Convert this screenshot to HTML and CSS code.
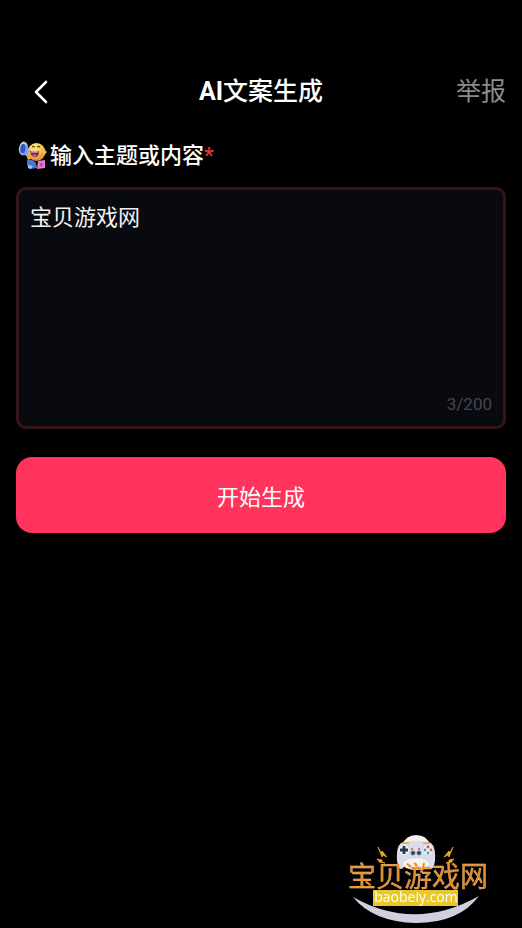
FILE: index.html
```html
<!DOCTYPE html>
<html lang="zh-CN">
<head>
<meta charset="utf-8">
<meta name="viewport" content="width=device-width, initial-scale=1">
<title>AI文案生成</title>
<link rel="stylesheet" href="styles.css">
</head>
<body>
<header class="topbar">
  <button class="back" type="button" aria-label="返回">
    <svg width="16" height="24" viewBox="0 0 16 24" fill="none" stroke="#fff" stroke-width="2.600" stroke-linecap="round" stroke-linejoin="round"><path d="M14 2 4 12 14 22"/></svg>
  </button>
  <h1 class="title"><span class="latin">AI</span>文案生成</h1>
  <a class="report" href="#">举报</a>
</header>
<main class="content">
  <form class="form">
    <label class="label" for="topic">
      <svg class="emoji" width="30" height="30" viewBox="0 0 30 30" aria-hidden="true">
        <defs>
          <radialGradient id="face" cx=".4" cy=".2" r=".8"><stop offset="0" stop-color="#fff08a"/><stop offset=".5" stop-color="#f7c64c"/><stop offset="1" stop-color="#d98b31"/></radialGradient>
          <linearGradient id="horn" x2="1" y2="1"><stop stop-color="#d7efff"/><stop offset="1" stop-color="#5a7ee8"/></linearGradient>
        </defs>
        <path d="M9 19q5-2 9 3l1 5-7 1-3-4z" fill="#4b73d0"/>
        <path d="m10 24 5 1-2 3-3-1z" fill="#a5c2f5"/>
        <circle cx="18.500" cy="11" r="9" fill="url(#face)"/>
        <path d="m25 8 4 3-3 3z" fill="#f3bd4b"/>
        <path d="M14 6q2-1 3 0M19 6q2-1 3 0" fill="none" stroke="#5b421d" stroke-width="1.300"/>
        <path d="M12 10q5 1 9 0 0 6-4 6-4 0-5-6z" fill="#7b235f"/>
        <path d="M13 10.500h7v1h-7z" fill="#f5d9e4"/>
        <path d="M14 14q3-1 5 0-2 3-5 0z" fill="#f7598f"/>
        <path d="m7 3 5 7-3 5-5-2z" fill="#8cb4f4"/>
        <ellipse cx="5.500" cy="7.500" rx="4.500" ry="7" fill="url(#horn)" transform="rotate(8 5 7)"/>
        <ellipse cx="5" cy="7.500" rx="2.600" ry="4.600" fill="#3554b8" transform="rotate(8 5 7)"/>
        <path d="m8 14 4-1 2 4-4 2z" fill="#e5a73f"/>
        <path d="m20 20 7-1v8l-8 1z" fill="#e878cf"/>
        <path d="m22 22 3 1-2 3z" fill="#a93aa0"/>
      </svg>
      <span>输入主题或内容</span><span class="required">*</span>
    </label>
    <div class="field">
      <textarea class="input" id="topic" maxlength="200" spellcheck="false">宝贝游戏网</textarea>
      <div class="count">3/200</div>
    </div>
    <button class="submit" type="button">开始生成</button>
  </form>
</main>
<svg class="watermark" width="144" height="96" viewBox="346 830 144 96" role="img" aria-label="宝贝游戏网 baobeiy.com">
  <path d="M353 897Q415 932 479 896 459 923 416 923 373 922 353 897Z" fill="#cfcfdd"/>
  <path d="M402 845Q406 835 416 835 427 835 430 845Z" fill="#f2f1ed"/>
  <path d="M401 843Q416 839 431 843 436 847 435 861 433 873 428 867 424 859 416 859 408 859 404 867 399 873 397 861 396 847 401 843Z" fill="#d9dbe9"/>
  <ellipse cx="416" cy="864" rx="13" ry="6" fill="#f4f3ef"/>
  <path d="M402 843h7M423 843h7" stroke="#e2a63f" stroke-width="1.500"/>
  <circle cx="404" cy="850" r="5" fill="#eef1f7"/><circle cx="428" cy="850" r="5" fill="#eef1f7"/>
  <path d="M400 850h8M404 846v8" stroke="#263949" stroke-width="2.800"/>
  <g fill="#d84b58"><circle cx="428" cy="847" r="1.400"/><circle cx="431" cy="850" r="1.400"/><circle cx="412" cy="849" r="1"/><circle cx="419" cy="849" r="1"/></g>
  <g fill="#38a9bc"><circle cx="425" cy="850" r="1.400"/><circle cx="428" cy="853" r="1.400"/></g>
  <g fill="#263949" stroke="#5b8297"><circle cx="413" cy="853" r="2"/><circle cx="419" cy="853" r="2"/></g>
  <path d="m378 847 3 6 1-2 5 6-4-2-1 2zM377 859l5 1v2l3 1-6-1v-1zM453 847l-3 6-1-2-5 6 4-2 1 2zM454 859l-5 1v2l-3 1 6-1v-1z" fill="#edaa20" stroke="#edaa20" stroke-width=".8"/>
  <text class="brand" x="348" y="887">宝贝游戏网</text>
  <path d="M373 890h85v16h-85z" fill="#e9c929"/>
  <text class="domain" x="416" y="902" text-anchor="middle">baobeiy.com</text>
</svg>
</body>
</html>
```
FILE: styles.css
```css
* {
  box-sizing: border-box;
}

body {
  margin: 0;
  min-height: 100vh;
  background: #000;
  color: #fff;
  font-family: Roboto, "Noto Sans CJK SC", sans-serif;
}

button {
  border: 0;
  font: inherit;
  color: inherit;
  cursor: pointer;
}

.topbar {
  display: grid;
  grid-template-columns: 1fr auto 1fr;
  align-items: center;
  height: 40px;
  margin-top: 72px;
  padding: 0 16px;
}

.back {
  display: flex;
  justify-self: start;
  padding: 0 16px;
  background: none;
}

.title {
  margin: 0;
  font-size: 25px;
  line-height: 40px;
  font-weight: 500;
}

.latin {
  font-weight: 700;
}

.report {
  justify-self: end;
  color: #8c8c8c;
  font-size: 25px;
  line-height: 40px;
  text-decoration: none;
}

.content {
  padding: 28px 16px 0;
}

.form {
  display: flex;
  flex-direction: column;
}

.label {
  display: flex;
  align-items: center;
  height: 32px;
  margin-bottom: 15px;
  font-size: 22px;
  line-height: 32px;
  font-weight: 500;
}

.emoji {
  margin: 0 2px;
}

.required {
  color: #e5383b;
}

.field {
  display: flex;
  flex-direction: column;
  height: 242px;
  padding: 12px 11px;
  border: 3px solid #35141a;
  border-radius: 10px;
  background: #080a10;
}

.input {
  flex: 1;
  width: 100%;
  padding: 0;
  border: 0;
  outline: 0;
  resize: none;
  background: none;
  color: #f2f2f2;
  font: inherit;
  font-size: 22px;
  line-height: 32px;
}

.count {
  align-self: flex-end;
  color: #454552;
  font-size: 17px;
  line-height: 20px;
}

.submit {
  height: 76px;
  margin-top: 28px;
  border-radius: 16px;
  background: #ff335c;
  font-size: 22px;
}

.watermark {
  position: fixed;
  right: 32px;
  bottom: 2px;
}

.brand {
  fill: #e58a24;
  stroke: #f4c690;
  stroke-width: 0.3px;
  font: 400 28px "Noto Sans CJK SC", sans-serif;
}

.domain {
  fill: #fff;
  font: 14px "Open Sans", sans-serif;
}
```
